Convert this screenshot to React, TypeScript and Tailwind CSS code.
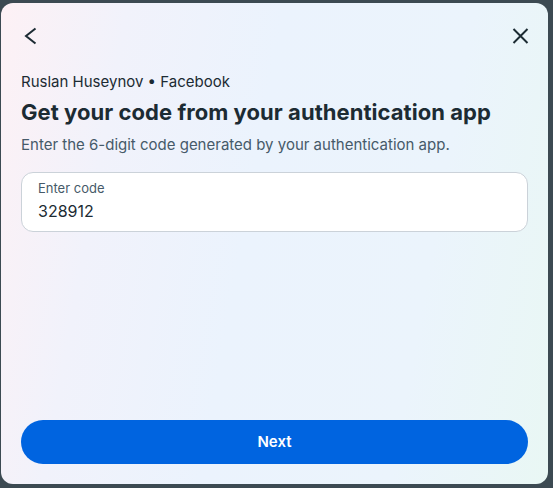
import React from 'react';

function App() {
  return (
    <div className="h-[488px] w-[553px] bg-[#3c4a52] pl-px pt-[3px] font-['Inter',sans-serif]">
      <div className="flex h-[481px] w-[547px] flex-col rounded-[12px] bg-[linear-gradient(100deg,#fdf1f5_0%,#f1f2fb_20%,#ebf3fd_45%,#ebf4fc_75%,#e9f7f4_100%)] px-5 pb-5">
        {/* top bar */}
        <div className="flex items-center justify-between pt-[22px]">
          <button className="h-[22px] w-[22px] text-[#1c2b33]">
            <svg width="22" height="22" viewBox="0 0 22 22" fill="none" stroke="currentColor" strokeWidth="2" className="overflow-visible">
              <path d="M14.5 3.5 5 11l9.5 7.5" />
            </svg>
          </button>
          <button className="h-[22px] w-[22px] text-[#1c2b33]">
            <svg width="22" height="22" viewBox="0 0 22 22" fill="none" stroke="currentColor" strokeWidth="2" className="overflow-visible">
              <path d="M7.5 4l14 14M21.5 4l-14 14" />
            </svg>
          </button>
        </div>

        <div className="mt-[25px] text-[15px] leading-5 text-[#1c2b33]">Ruslan Huseynov • Facebook</div>
        <h1 className="mt-[6px] text-[22px] font-bold leading-7 tracking-[0.05px] text-[#1c2b33]">
          Get your code from your authentication app
        </h1>
        <p className="mt-[9px] text-[15px] leading-5 text-[#465a69]">
          Enter the 6-digit code generated by your authentication app.
        </p>

        <div className="mt-[17px] flex h-[60px] flex-col rounded-[12px] border border-[#cbd2d9] bg-white px-4 pt-[7px]">
          <span className="text-[13px] leading-4 text-[#465a69]">Enter code</span>
          <span className="mt-[5px] text-[16px] leading-5 text-[#1c2b33]">328912</span>
        </div>

        <div className="flex-1" />

        <button className="h-[44px] w-full rounded-full bg-[#0064e0] text-[15px] font-semibold text-white">
          Next
        </button>
      </div>
    </div>
  );
}

export default App;
